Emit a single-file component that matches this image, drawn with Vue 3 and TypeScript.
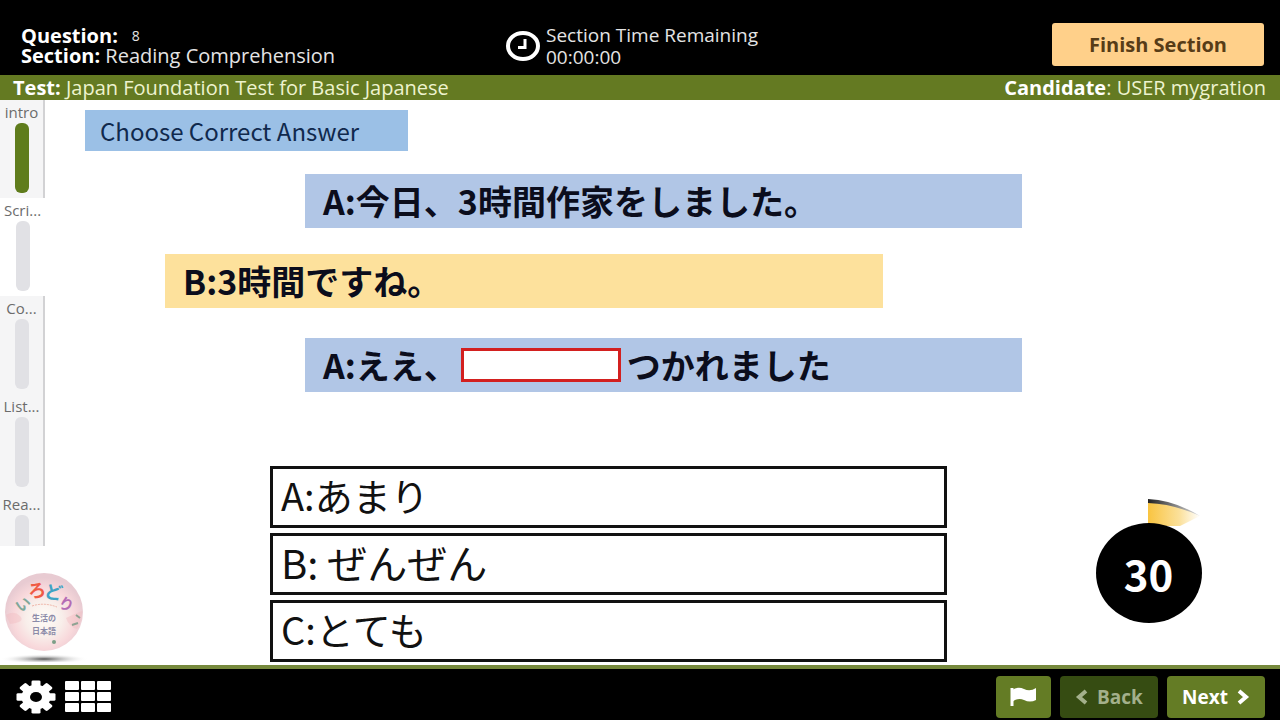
<script setup lang="ts">
import { ref } from 'vue'

interface Step {
  label: string
  done: boolean
  shaded: boolean
}

interface Option {
  key: string
  text: string
  spaced: boolean
}

const steps: Step[] = [
  { label: 'intro', done: true, shaded: true },
  { label: 'Scri...', done: false, shaded: false },
  { label: 'Co...', done: false, shaded: true },
  { label: 'List...', done: false, shaded: true },
  { label: 'Rea...', done: false, shaded: true },
]

const options: Option[] = [
  { key: 'A', text: 'A:あまり', spaced: false },
  { key: 'B', text: 'B: ぜんぜん', spaced: true },
  { key: 'C', text: 'C:とても', spaced: false },
]

const teeth: number[] = [0, 45, 90, 135, 180, 225, 270, 315]
const cells: { x: number; y: number }[] = [0, 1, 2].flatMap((r) =>
  [0, 1, 2].map((c) => ({ x: c * 16, y: r * 11 })),
)

const blank = ref('')
const selected = ref('')
</script>

<template>
  <div class="app">
    <header class="top">
      <div class="info">
        <div class="row"><b>Question:</b><span class="number">8</span></div>
        <div><b>Section:</b> Reading Comprehension</div>
      </div>
      <div class="clock">
        <svg width="36" height="32" viewBox="0 0 36 32" aria-hidden="true">
          <ellipse cx="18" cy="16" rx="15" ry="13" fill="none" stroke="#fff" stroke-width="4" />
          <path d="M20 9v8.500h-7" fill="none" stroke="#fff" stroke-width="3" />
        </svg>
        <div>
          <div>Section Time Remaining</div>
          <div>00:00:00</div>
        </div>
      </div>
      <button class="finish" type="button">Finish Section</button>
    </header>

    <div class="bar">
      <div><b>Test:</b> Japan Foundation Test for Basic Japanese</div>
      <div><b>Candidate</b>: USER mygration</div>
    </div>

    <main class="main">
      <aside class="side">
        <ol class="steps">
          <li v-for="s in steps" :key="s.label" class="step" :class="{ shaded: s.shaded }">
            <span class="step-label">{{ s.label }}</span>
            <span class="track" :class="{ done: s.done }"></span>
          </li>
        </ol>
        <svg class="logo" width="96" height="92" viewBox="0 0 96 92" role="img" aria-label="いろどり">
          <defs>
            <radialGradient id="ball" cx="50%" cy="58%" r="52%">
              <stop offset="0" stop-color="#fffdf8" />
              <stop offset="0.45" stop-color="#f8eeea" />
              <stop offset="0.75" stop-color="#f8d8db" />
              <stop offset="1" stop-color="#e8cbd2" />
            </radialGradient>
            <radialGradient id="shade">
              <stop offset="0" stop-color="#555" />
              <stop offset="1" stop-color="#fff" stop-opacity="0" />
            </radialGradient>
          </defs>
          <ellipse cx="44" cy="89" rx="44" ry="5" fill="url(#shade)" />
          <circle cx="44" cy="42" r="39" fill="url(#ball)" />
          <path d="M6 45q8-5 14 1t-10 8zM66 48q8-4 16-7 0 10-5 18-8-2-11-11z" fill="#efb9bf" opacity=".4" />
          <path d="M32 36q12-4 25 1" stroke="#efb3a6" stroke-width="1" stroke-dasharray="2 1" fill="none" />
          <g class="logo-name">
            <text x="23" y="40" fill="#7fa89a" transform="rotate(-32 23 34)">い</text>
            <text x="37" y="27" fill="#ef5b45" class="big" transform="rotate(-8 37 20)">ろ</text>
            <text x="54" y="29" fill="#3fa3c4" class="big" transform="rotate(10 54 20)">ど</text>
            <text x="67" y="40" fill="#b46bb5" transform="rotate(28 67 33)">り</text>
          </g>
          <g class="logo-sub">
            <text x="44" y="51">生活の</text>
            <text x="44" y="64">日本語</text>
          </g>
          <circle cx="54" cy="72" r="2" fill="#7d9f87" />
          <path d="M76 45l4 3M72 55l6-2" stroke="#8fa393" stroke-width="2" />
        </svg>
      </aside>

      <section class="question">
        <h1 class="title">Choose Correct Answer</h1>
        <p class="line a">A:今日、3時間作家をしました。</p>
        <p class="line b">B:3時間ですね。</p>
        <p class="line a">
          <label for="blank">A:ええ、</label>
          <input id="blank" v-model="blank" class="blank" type="text" />
          <span>つかれました</span>
        </p>
        <div class="options">
          <button
            v-for="o in options"
            :key="o.key"
            class="option"
            :class="{ spaced: o.spaced }"
            type="button"
            :aria-pressed="selected === o.key"
            @click="selected = o.key"
          >{{ o.text }}</button>
        </div>
      </section>

      <div class="timer">
        <svg class="sweep" width="106" height="28" viewBox="0 0 106 28" aria-hidden="true">
          <defs>
            <linearGradient id="gold" x1="0" x2="1">
              <stop offset="0" stop-color="#f9c440" />
              <stop offset="0.6" stop-color="#fbe09a" />
              <stop offset="1" stop-color="#fff" />
            </linearGradient>
            <linearGradient id="edge" x1="0" x2="1">
              <stop offset="0" stop-color="#222" />
              <stop offset="1" stop-color="#ddd" />
            </linearGradient>
          </defs>
          <path d="M52 3Q78 4 104 18L84 28H52z" fill="url(#gold)" />
          <path d="M52 1Q78 2 104 18Q78 6 52 5z" fill="url(#edge)" />
        </svg>
        <div class="disc">30</div>
      </div>
    </main>

    <footer class="bottom">
      <div class="tools">
        <button class="icon" type="button" aria-label="Settings">
          <svg width="40" height="34" viewBox="-20 -17 40 34" aria-hidden="true">
            <g transform="scale(1 .85)">
              <rect v-for="t in teeth" :key="t" x="-4.500" y="-19.500" width="9" height="12" rx="1.500" fill="#fff" :transform="`rotate(${t})`" />
              <circle r="14.500" fill="#fff" />
              <circle r="6" fill="#000" />
            </g>
          </svg>
        </button>
        <button class="icon" type="button" aria-label="Question list">
          <svg width="46" height="32" viewBox="0 0 46 32" aria-hidden="true">
            <rect v-for="(c, i) in cells" :key="i" :x="c.x" :y="c.y" width="14" height="9" rx="1" fill="#fff" />
          </svg>
        </button>
      </div>
      <div class="nav">
        <button class="btn flag" type="button" aria-label="Flag question">
          <svg width="30" height="22" viewBox="0 0 30 22" aria-hidden="true">
            <path d="M3 2v18" stroke="#fff" stroke-width="3" />
            <path d="M3 4q6-4 12-1t12-1v12q-6 3-12 0t-12 2z" fill="#fff" />
          </svg>
        </button>
        <button class="btn back" type="button" disabled>
          <svg width="14" height="16" viewBox="0 0 14 16" aria-hidden="true">
            <path d="M11 2L4 8l7 6" fill="none" stroke="#a3b08b" stroke-width="4" />
          </svg>
          Back
        </button>
        <button class="btn" type="button">
          Next
          <svg width="14" height="16" viewBox="0 0 14 16" aria-hidden="true">
            <path d="M3 2l7 6-7 6" fill="none" stroke="#fff" stroke-width="4" />
          </svg>
        </button>
      </div>
    </footer>
  </div>
</template>

<style>
body {
  margin: 0;
}
</style>

<style scoped>
.app {
  display: flex;
  flex-direction: column;
  min-height: 100vh;
  background: #fff;
  font-family: 'Open Sans', 'Noto Sans CJK JP', sans-serif;
}
button {
  font-family: inherit;
  cursor: pointer;
}
.top {
  display: grid;
  grid-template-columns: 484px 1fr auto;
  align-items: center;
  padding: 14px 16px 0 21px;
  min-height: 61px;
  background: #000;
  color: #e4e4e4;
  font-size: 20px;
  line-height: 20px;
}
.info {
  padding-top: 2px;
}
.info b {
  color: #fff;
}
.row {
  display: flex;
  align-items: center;
  gap: 14px;
}
.number {
  font-size: 14px;
}
.clock {
  display: flex;
  align-items: center;
  gap: 5px;
  padding-top: 2px;
  font-size: 19px;
  line-height: 22px;
}
.finish {
  width: 212px;
  height: 43px;
  padding: 0;
  border: 0;
  border-radius: 3px;
  background: #ffd08a;
  color: #573c17;
  font-size: 20px;
  font-weight: 700;
}
.bar {
  display: flex;
  justify-content: space-between;
  padding: 0 14px 0 13px;
  background: #647a22;
  color: #eef3cf;
  font-size: 20px;
  line-height: 25px;
}
.bar b {
  color: #fff;
}
.main {
  display: flex;
  flex: 1;
}
.side {
  display: flex;
  flex-direction: column;
  gap: 24px;
  width: 45px;
  flex: none;
}
.steps {
  margin: 0;
  padding: 0;
  list-style: none;
  height: 446px;
  overflow: hidden;
}
.step {
  display: flex;
  flex-direction: column;
  align-items: center;
  box-sizing: border-box;
  height: 98px;
  padding-top: 4px;
}
.shaded {
  background: #f5f5f6;
  border-right: 2px solid #d2d2d4;
}
.step-label {
  color: #6c6c6c;
  font-size: 15px;
  line-height: 16px;
  margin-bottom: 3px;
}
.track {
  width: 14px;
  height: 70px;
  border-radius: 6px;
  background: #e1e1e5;
}
.track.done {
  background: #5f7c1c;
}
.logo {
  flex: none;
}
.logo-name {
  font: 700 15px 'Noto Sans CJK JP', sans-serif;
  text-anchor: middle;
}
.logo-name .big {
  font-size: 18px;
}
.logo-sub {
  font: 700 8px 'Noto Sans CJK JP', sans-serif;
  text-anchor: middle;
  fill: #8b8ba8;
}
.question {
  flex: 1;
  display: flex;
  flex-direction: column;
  font-family: 'Noto Sans CJK JP', sans-serif;
  padding-top: 10px;
}
.title {
  align-self: flex-start;
  box-sizing: border-box;
  width: 323px;
  margin: 0 0 23px 40px;
  padding-left: 15px;
  background: #9bc0e6;
  color: #10294d;
  font-size: 24px;
  font-weight: 400;
  line-height: 41px;
}
.line {
  display: flex;
  align-items: center;
  margin: 0;
  padding-left: 18px;
  color: #0b0d1c;
  font-size: 34px;
  font-weight: 700;
  line-height: 54px;
  white-space: nowrap;
}
.a {
  margin-left: 260px;
  background: #b1c6e6;
}
.b {
  margin: 26px 139px 30px 120px;
  background: #fde19c;
}
.blank {
  box-sizing: border-box;
  width: 160px;
  height: 34px;
  margin: 0 6px 0 3px;
  border: 3px solid #d3201f;
  border-radius: 0;
  background: #fff;
  font-size: 20px;
}
.options {
  display: flex;
  flex-direction: column;
  gap: 5px;
  margin: 74px 75px 0 225px;
}
.option {
  height: 62px;
  padding: 0 0 4px 8px;
  border: 3px solid #111;
  background: #fff;
  color: #111;
  font-size: 38px;
  line-height: 52px;
  text-align: left;
}
.spaced {
  font-size: 40px;
}
.timer {
  display: flex;
  flex-direction: column;
  justify-content: flex-end;
  align-items: center;
  box-sizing: border-box;
  width: 258px;
  flex: none;
  padding: 0 5px 42px 0;
}
.sweep {
  margin-bottom: -3px;
}
.disc {
  width: 106px;
  border-radius: 50%;
  background: #000;
  color: #fff;
  font: 700 42px/100px 'Noto Sans CJK JP', sans-serif;
  text-align: center;
}
.bottom {
  display: flex;
  justify-content: space-between;
  align-items: center;
  box-sizing: border-box;
  height: 55px;
  padding: 4px 15px 0 16px;
  border-top: 4px solid #76893c;
  background: #000;
}
.tools,
.nav {
  display: flex;
  align-items: center;
  gap: 9px;
}
.icon {
  display: flex;
  padding: 0;
  border: 0;
  background: none;
}
.btn {
  display: flex;
  align-items: center;
  justify-content: center;
  gap: 8px;
  width: 98px;
  height: 42px;
  padding: 0;
  border: 0;
  border-radius: 4px;
  background: #647c25;
  color: #fff;
  font-size: 19px;
  font-weight: 700;
}
.flag {
  width: 55px;
}
.back {
  background: #364c12;
  color: #a3b08b;
}
</style>
